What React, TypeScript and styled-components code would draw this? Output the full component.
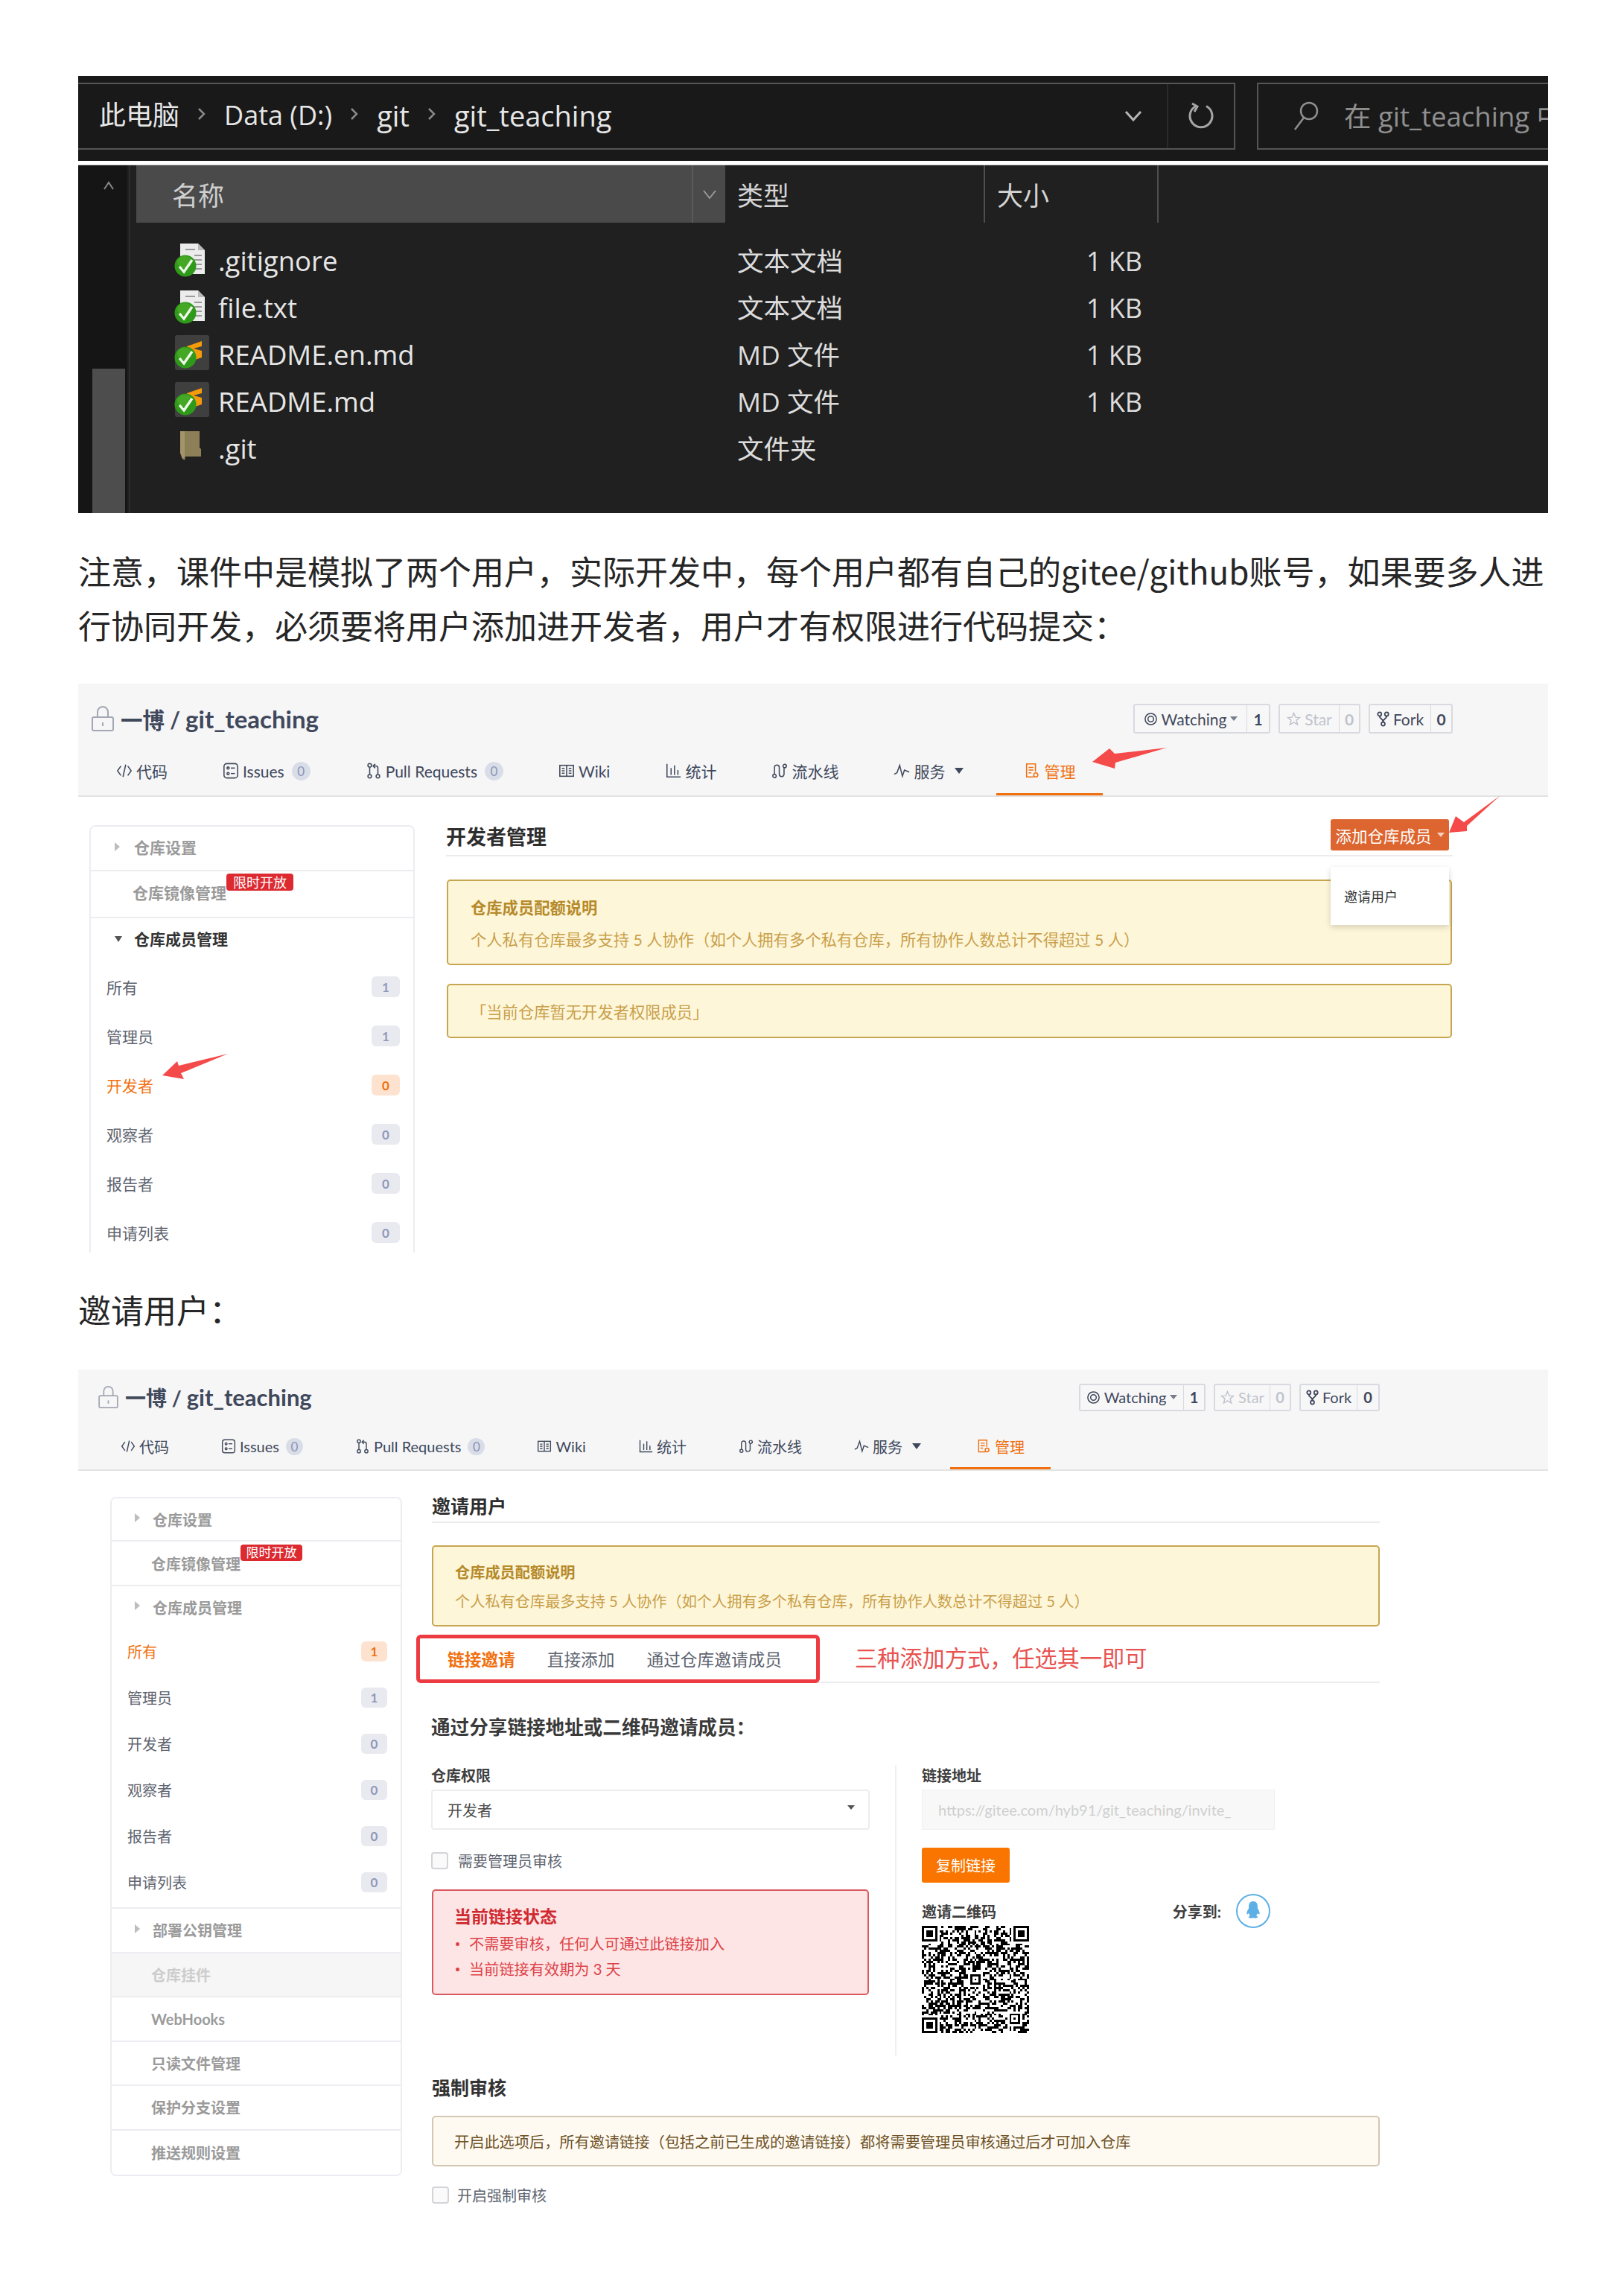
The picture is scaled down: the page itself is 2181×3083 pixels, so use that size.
import React, { useMemo } from 'react'
import styled, { createGlobalStyle, ThemeProvider } from 'styled-components'

const gitee = `"Lato", "Noto Sans CJK SC", sans-serif`
const explorer = `"Open Sans", "Noto Sans CJK SC", sans-serif`
const prose = `"Noto Sans CJK SC", "Noto Sans", sans-serif`

const large = {
  title: 29.5, repo: 33, tab: 21, tabPad: 37, tabIcon: 22, navLeft: 14, headRow: 94, navRow: 56, navLift: 10,
  lockW: 30, lockH: 34, headLeft: 18, headRight: 128, titleGap: 9,
  btnH: 40, btnFont: 21, btnGap: 11, tabBadge: 25, badgeGap: 5, caretGap: 7,
  side: 437, sideLeft: 15, sideGap: 42, font: 21, row: 60, rowB: 63, rowC: 59, item: 66, rowShift: 5,
  caretLeft: 34, textLeft: 58, plainLeft: 56, badgeW: 38, badgeH: 28, tag: 18, tagW: 90, tagH: 23, tagTop: -22,
}

const small = {
  title: 28, repo: 31, tab: 20, tabPad: 35, tabIcon: 20, navLeft: 22, headRow: 74, navRow: 60, navLift: 2,
  lockW: 27, lockH: 30, headLeft: 27, headRight: 226, titleGap: 9,
  btnH: 37, btnFont: 20, btnGap: 11, tabBadge: 23, badgeGap: 4, caretGap: 4,
  side: 392, sideLeft: 43, sideGap: 40, font: 20, row: 58, rowB: 60, rowC: 56, item: 62, rowShift: 0,
  caretLeft: 33, textLeft: 55, plainLeft: 53, badgeW: 35, badgeH: 27, tag: 17, tagW: 83, tagH: 22, tagTop: -23,
}

const GlobalStyle = createGlobalStyle`
  html, body { margin: 0; padding: 0; background: #fff; }
  body { width: 2181px; height: 3083px; overflow: hidden; }
  * { box-sizing: border-box; }
`

const Page = styled.div`
  width: 2181px;
  padding: 102px 102px 0 105px;
`

/* ---------- file explorer shot ---------- */

const Explorer = styled.section`
  height: 587px;
  background: #202020;
  font-family: ${explorer};
  color: #e6e6e6;
  font-size: 36.5px;
  overflow: hidden;
`

const AddressStrip = styled.div`
  height: 114px;
  padding-top: 9px;
  background: #191919;
  display: flex;
  gap: 29px;
`

const AddressBox = styled.div`
  width: 1554px;
  height: 90px;
  border: 2px solid #555;
  border-left: 0;
  display: flex;
  align-items: center;
  padding-left: 28px;
`

const Crumb = styled.span<{ $size?: number }>`
  line-height: 1;
  white-space: nowrap;
  margin-bottom: 3px;
  font-size: ${({ $size = 36.5 }) => $size}px;
`

const CrumbSep = styled.svg`
  width: 16px;
  height: 24px;
  margin: 0 22px 6px;
  fill: none;
  stroke: #8a8a8a;
  stroke-width: 2.5;
`

const AddressTools = styled.div`
  margin-left: auto;
  display: flex;
  align-items: center;
  height: 100%;
`

const ToolCell = styled.div<{ $line?: boolean }>`
  width: 90px;
  height: 100%;
  display: flex;
  align-items: center;
  justify-content: center;
  border-left: ${({ $line }) => ($line ? '2px solid #2a2a2a' : '0')};
`

const SearchBox = styled.div`
  flex: 1;
  height: 90px;
  border: 2px solid #555;
  border-right: 0;
  display: flex;
  align-items: center;
  padding-left: 46px;
  color: #8f8f8f;
  white-space: nowrap;
  overflow: hidden;
  gap: 33px;
  line-height: 1;
  & > svg {
    flex: none;
  }
`

const WhiteBar = styled.div`
  height: 6px;
  background: #fff;
  border-bottom: 1px solid #ccc;
`

const ExplorerBody = styled.div`
  display: flex;
  height: 467px;
`

const NavPane = styled.div`
  width: 66px;
  background: #151515;
  display: flex;
  flex-direction: column;
  align-items: flex-end;
  justify-content: space-between;
  padding: 20px 3px 0 0;
`

const NavCaret = styled.svg`
  width: 16px;
  height: 14px;
  margin-right: 14px;
  fill: none;
  stroke: #8a8a8a;
  stroke-width: 2;
`

const NavThumb = styled.div`
  width: 44px;
  height: 194px;
  background: #4d4d4d;
`

const Files = styled.div`
  flex: 1;
  border-left: 2px solid #2c2c2c;
  margin-left: 2px;
`

const FileHead = styled.div`
  display: grid;
  grid-template-columns: 791px 349px 233px;
  height: 77px;
  margin-left: 8px;
`

const NameHead = styled.div`
  background: #4a4a4a;
  display: flex;
  align-items: center;
  padding-left: 48px;
  color: #cfcfcf;
  font-size: 35px;
  position: relative;
`

const NameSort = styled.div`
  position: absolute;
  right: 0;
  top: 0;
  bottom: 0;
  width: 45px;
  border-left: 2px solid #5a5a5a;
  display: flex;
  align-items: center;
  justify-content: center;
`

const HeadCell = styled.div`
  display: flex;
  align-items: center;
  padding-left: 16px;
  font-size: 35px;
  color: #d4d4d4;
  border-right: 2px solid #4e4e4e;
`

const FileList = styled.div`
  padding-top: 20px;
`

const FileRow = styled.div`
  display: grid;
  grid-template-columns: 799px 349px 233px;
  height: 63px;
  align-items: center;
`

const FileName = styled.div`
  display: flex;
  align-items: center;
  padding-left: 60px;
  gap: 12px;
  line-height: 1;
`

const FileType = styled.div`
  padding-left: 16px;
  font-size: 35.5px;
  line-height: 1;
  color: #dcdcdc;
`

const FileSize = styled.div`
  text-align: right;
  padding-right: 22px;
  line-height: 1;
  font-size: 36px;
  color: #dcdcdc;
`

const FileGlyph = styled.svg`
  width: 46px;
  height: 48px;
  flex: none;
  overflow: visible;
`

const TickBall = () => (
  <>
    <circle cx="14" cy="30" r="14.5" fill="#2f9a1a" />
    <ellipse cx="13" cy="25" rx="10" ry="8" fill="#58b52f" opacity="0.55" />
    <polyline points="6,31 12,38 23,22" fill="none" stroke="#eef8e8" strokeWidth="3.4" />
  </>
)

const FileIcon = ({ kind }: { kind: 'doc' | 'md' | 'dir' }) => {
  if (kind === 'doc') {
    return (
      <FileGlyph viewBox="0 0 46 48">
        <path d="M7 0h24l9 9v32H7z" fill="#ececec" />
        <path d="M31 0l9 9h-9z" fill="#b9b9b9" />
        <path d="M14 8h13M26 16h10M26 22h10M26 28h10M26 34h10" stroke="#9b9b9b" strokeWidth="2" />
        <TickBall />
      </FileGlyph>
    )
  }
  if (kind === 'md') {
    return (
      <FileGlyph viewBox="0 0 46 48">
        <rect x="0" y="-3" width="46" height="47" rx="3" fill="#3f3f3f" />
        <path d="M36 5v7l-11 3 11 3v9l-9 3v-7l-11-4v-7z" fill="#f39b0a" />
        <g transform="translate(0 -3)">
          <TickBall />
        </g>
      </FileGlyph>
    )
  }
  return (
    <FileGlyph viewBox="0 0 46 48">
      <path d="M7 0h26v22l2 2v10H14l-1 5-3-2-3-8z" fill="#8d8058" />
      <path d="M7 0h6v34l-3 3-3-8z" fill="#a39569" />
    </FileGlyph>
  )
}

const explorerRows: { name: string; type: string; size: string; kind: 'doc' | 'md' | 'dir' }[] = [
  { name: '.gitignore', type: '文本文档', size: '1 KB', kind: 'doc' },
  { name: 'file.txt', type: '文本文档', size: '1 KB', kind: 'doc' },
  { name: 'README.en.md', type: 'MD 文件', size: '1 KB', kind: 'md' },
  { name: 'README.md', type: 'MD 文件', size: '1 KB', kind: 'md' },
  { name: '.git', type: '文件夹', size: '', kind: 'dir' },
]

const Sep = () => (
  <CrumbSep viewBox="0 0 16 24">
    <polyline points="4,5 11,12 4,19" />
  </CrumbSep>
)

const ExplorerShot = () => (
  <Explorer>
    <AddressStrip>
      <AddressBox>
        <Crumb $size={36}>此电脑</Crumb>
        <Sep />
        <Crumb $size={36}>Data (D:)</Crumb>
        <Sep />
        <Crumb $size={38}>git</Crumb>
        <Sep />
        <Crumb $size={38}>git_teaching</Crumb>
        <AddressTools>
          <ToolCell>
            <svg width="26" height="18" viewBox="0 0 26 18" fill="none" stroke="#b5b5b5" strokeWidth="3">
              <polyline points="3,3 13,14 23,3" />
            </svg>
          </ToolCell>
          <ToolCell $line>
            <svg width="34" height="38" viewBox="0 0 34 38" fill="none" stroke="#a5a5a5" strokeWidth="3">
              <path d="M10 5.5A15 15 0 1 0 24 5.5" />
              <polyline points="5,2 12,6 8,13" />
            </svg>
          </ToolCell>
        </AddressTools>
      </AddressBox>
      <SearchBox>
        <svg width="36" height="40" viewBox="0 0 36 40" fill="none" stroke="#8f8f8f" strokeWidth="2.5">
          <circle cx="22" cy="13" r="11" />
          <line x1="15" y1="22" x2="3" y2="38" />
        </svg>
        <span>在 git_teaching 中</span>
      </SearchBox>
    </AddressStrip>
    <WhiteBar />
    <ExplorerBody>
      <NavPane>
        <NavCaret viewBox="0 0 16 14">
          <polyline points="2,12 8,3 14,12" />
        </NavCaret>
        <NavThumb />
      </NavPane>
      <Files>
        <FileHead>
          <NameHead>
            名称
            <NameSort>
              <svg width="20" height="14" viewBox="0 0 20 14" fill="none" stroke="#9a9a9a" strokeWidth="2">
                <polyline points="2,2 10,12 18,2" />
              </svg>
            </NameSort>
          </NameHead>
          <HeadCell>类型</HeadCell>
          <HeadCell>大小</HeadCell>
        </FileHead>
        <FileList>
          {explorerRows.map((r) => (
            <FileRow key={r.name}>
              <FileName>
                <FileIcon kind={r.kind} />
                {r.name}
              </FileName>
              <FileType>{r.type}</FileType>
              <FileSize>{r.size}</FileSize>
            </FileRow>
          ))}
        </FileList>
      </Files>
    </ExplorerBody>
  </Explorer>
)

/* ---------- prose ---------- */

const Prose = styled.p<{ $top: number }>`
  margin: ${({ $top }) => $top}px 0 0;
  font-family: ${prose};
  font-size: 44px;
  line-height: 73px;
  color: #262626;
  white-space: nowrap;
`

const ProseLine = styled.span`
  display: block;
`

/* ---------- gitee shots ---------- */

const Shot = styled.section<{ $top: number; $height: number }>`
  position: relative;
  margin-top: ${({ $top }) => $top}px;
  height: ${({ $height }) => $height}px;
  font-family: ${gitee};
  color: #40485b;
`

const RepoHead = styled.header`
  background: #f6f6f7;
  border-bottom: 2px solid #e3e3e3;
`

const TitleRow = styled.div`
  height: ${({ theme }) => theme.headRow}px;
  padding: 0 ${({ theme }) => theme.headRight}px 0 ${({ theme }) => theme.headLeft}px;
  display: flex;
  align-items: center;
  gap: ${({ theme }) => theme.titleGap}px;
`

const LockGlyph = styled.svg`
  width: ${({ theme }) => theme.lockW}px;
  height: ${({ theme }) => theme.lockH}px;
  flex: none;
  fill: none;
  stroke: #a3a7b4;
  stroke-width: 2;
`

const RepoTitle = styled.h1`
  margin: 0;
  font-size: ${({ theme }) => theme.title}px;
  font-weight: 700;
  color: #40485b;
  line-height: 1;
  white-space: nowrap;
`

const RepoName = styled.span`
  font-size: ${({ theme }) => theme.repo}px;
`

const Stats = styled.div`
  margin-left: auto;
  display: flex;
  gap: ${({ theme }) => theme.btnGap}px;
`

const StatBtn = styled.div<{ $w: number; $off?: boolean }>`
  width: ${({ $w }) => $w}px;
  height: ${({ theme }) => theme.btnH}px;
  display: flex;
  align-items: stretch;
  background: #f7f7f8;
  border: 2px solid #d8dae0;
  border-radius: 3px;
  font-size: ${({ theme }) => theme.btnFont}px;
  color: ${({ $off }) => ($off ? '#c0c3cc' : '#40485b')};
`

const StatLabel = styled.span`
  flex: 1;
  display: flex;
  align-items: center;
  justify-content: center;
  gap: 5px;
  white-space: nowrap;
`

const StatCount = styled.span<{ $w: number }>`
  width: ${({ $w }) => $w}px;
  border-left: 1px solid #d8dae0;
  display: flex;
  align-items: center;
  justify-content: center;
  font-weight: 700;
`

const SmallCaret = styled.i`
  display: inline-block;
  border: 5px solid transparent;
  border-top: 6px solid currentColor;
  border-bottom: 0;
  opacity: 0.7;
`

const NavRow = styled.nav`
  height: ${({ theme }) => theme.navRow}px;
  padding-left: ${({ theme }) => theme.navLeft}px;
  display: flex;
`

const Tab = styled.div<{ $active?: boolean }>`
  height: 100%;
  padding: 0 ${({ theme }) => theme.tabPad}px ${({ theme }) => theme.navLift}px;
  display: flex;
  align-items: center;
  gap: 5px;
  font-size: ${({ theme }) => theme.tab}px;
  white-space: nowrap;
  color: ${({ $active }) => ($active ? '#f0700f' : '#40485b')};
  box-shadow: ${({ $active }) => ($active ? 'inset 0 -3px 0 #f0700f' : 'none')};
`

const TabGlyph = styled.svg`
  width: ${({ theme }) => theme.tabIcon}px;
  height: ${({ theme }) => theme.tabIcon + 2}px;
  flex: none;
  fill: none;
  stroke: currentColor;
  stroke-width: 1.7;
`

const TabBadge = styled.span`
  width: ${({ theme }) => theme.tabBadge}px;
  height: ${({ theme }) => theme.tabBadge}px;
  margin-left: ${({ theme }) => theme.badgeGap}px;
  border-radius: 50%;
  background: #d9dde7;
  color: #8a94b8;
  font-size: 17px;
  display: flex;
  align-items: center;
  justify-content: center;
`

const DownCaret = styled.i`
  display: inline-block;
  margin: 0 ${({ theme }) => theme.caretGap}px 0 8px;
  border: 6px solid transparent;
  border-top: 8px solid #40485b;
  border-bottom: 0;
`

const Workspace = styled.div`
  display: flex;
  align-items: flex-start;
  padding-left: ${({ theme }) => theme.sideLeft}px;
  gap: ${({ theme }) => theme.sideGap}px;
`

const SideNav = styled.aside<{ $top: number; $clip?: number }>`
  width: ${({ theme }) => theme.side}px;
  margin-top: ${({ $top }) => $top}px;
  height: ${({ $clip }) => ($clip ? `${$clip}px` : 'auto')};
  overflow: hidden;
  border: 2px solid #ecedf2;
  border-bottom-width: ${({ $clip }) => ($clip ? 0 : 2)}px;
  border-radius: 8px ${({ $clip }) => ($clip ? '8px 0 0' : '8px 8px 8px')};
  font-size: ${({ theme }) => theme.font}px;
`

const SideRow = styled.div<{ $h: number; $muted?: boolean; $strong?: boolean; $line?: boolean }>`
  position: relative;
  height: ${({ $h }) => $h}px;
  display: flex;
  align-items: center;
  padding-left: ${({ theme }) => theme.plainLeft}px;
  padding-bottom: ${({ theme }) => theme.rowShift}px;
  font-weight: 700;
  color: ${({ $muted, $strong }) => ($muted ? '#cdcdcd' : $strong ? '#333' : '#9b9b9b')};
  background: ${({ $muted }) => ($muted ? '#f6f6f6' : '#fff')};
  border-bottom: ${({ $line = true }) => ($line ? '2px solid #ecedf0' : '0')};
`

const SideHead = styled(SideRow)`
  padding-left: ${({ theme }) => theme.textLeft}px;
`

const SideCaret = styled.i<{ $open?: boolean; $strong?: boolean }>`
  position: absolute;
  left: ${({ theme }) => theme.caretLeft - 2}px;
  top: 50%;
  margin-top: -8px;
  border-style: solid;
  border-color: transparent;
  ${({ $open, $strong }) =>
    $open
      ? `border-width: 8px 5px 0; border-top-color: ${$strong ? '#555' : '#aaa'}; margin-top: -6px;`
      : 'border-width: 6px 0 6px 7px; border-left-color: #bdbdbd;'}
`

const TagHost = styled.span`
  position: relative;
`

const LimitTag = styled.em`
  position: absolute;
  left: 100%;
  top: ${({ theme }) => theme.tagTop}px;
  width: ${({ theme }) => theme.tagW}px;
  height: ${({ theme }) => theme.tagH}px;
  margin-top: 12px;
  border-radius: 4px;
  background: #dc2a30;
  color: #fff;
  font-size: ${({ theme }) => theme.tag}px;
  font-style: normal;
  font-weight: 400;
  display: flex;
  align-items: center;
  justify-content: center;
  white-space: nowrap;
  line-height: 1;
`

const MemberList = styled.div<{ $tail: number }>`
  padding-bottom: ${({ $tail }) => $tail}px;
  border-bottom: 2px solid #ecedf0;
`

const MemberRow = styled.div<{ $active?: boolean }>`
  height: ${({ theme }) => theme.item}px;
  display: flex;
  align-items: center;
  justify-content: space-between;
  padding: 0 18px 0 21px;
  color: ${({ $active }) => ($active ? '#f0700f' : '#5e6470')};
`

const Count = styled.span<{ $active?: boolean }>`
  width: ${({ theme }) => theme.badgeW}px;
  height: ${({ theme }) => theme.badgeH}px;
  border-radius: 6px;
  display: flex;
  align-items: center;
  justify-content: center;
  font-size: 17px;
  font-weight: 700;
  background: ${({ $active }) => ($active ? '#fde3cf' : '#e9eaef')};
  color: ${({ $active }) => ($active ? '#f0700f' : '#8f98bb')};
`

const Main = styled.main<{ $w: number; $top: number }>`
  width: ${({ $w }) => $w}px;
  margin-top: ${({ $top }) => $top}px;
  position: relative;
`

const MainHead = styled.div<{ $h: number }>`
  height: ${({ $h }) => $h}px;
  display: flex;
  align-items: flex-start;
  justify-content: space-between;
  border-bottom: 2px solid #ececec;
`

const MainTitle = styled.h2<{ $size: number; $pad: number }>`
  margin: 0;
  padding-top: ${({ $pad }) => $pad}px;
  font-size: ${({ $size }) => $size}px;
  line-height: 1.2;
  font-weight: 700;
  color: #2e2e2e;
`

const AddBtn = styled.div`
  width: 159px;
  height: 42px;
  margin-right: 5px;
  border-radius: 3px;
  background: #dd6530;
  color: #fff;
  font-size: 21.5px;
  display: flex;
  align-items: center;
  justify-content: center;
  gap: 7px;
  white-space: nowrap;
`

const AddMenu = styled.div`
  position: absolute;
  right: 5px;
  top: 64px;
  width: 159px;
  height: 78px;
  padding-left: 18px;
  background: #fff;
  box-shadow: 0 3px 8px rgba(0, 0, 0, 0.16);
  display: flex;
  align-items: center;
  font-size: 18px;
  color: #333;
  z-index: 2;
`

const toneMap = {
  warn: { bg: '#fef6d9', line: '#c7a651', text: '#c9a04a' },
  note: { bg: '#fefaf2', line: '#d3c7b2', text: '#6f5226' },
  danger: { bg: '#fee5e5', line: '#d9595f', text: '#dc4248' },
}

const Notice = styled.div<{ $tone: keyof typeof toneMap; $top: number; $h: number; $left: number; $size: number; $inset?: number }>`
  margin-top: ${({ $top }) => $top}px;
  margin-left: ${({ $inset = 0 }) => $inset}px;
  margin-right: ${({ $inset = 0 }) => $inset}px;
  height: ${({ $h }) => $h}px;
  padding-left: ${({ $left }) => $left}px;
  background: ${({ $tone }) => toneMap[$tone].bg};
  border: 2px solid ${({ $tone }) => toneMap[$tone].line};
  border-radius: 5px;
  color: ${({ $tone }) => toneMap[$tone].text};
  font-size: ${({ $size }) => $size}px;
  display: flex;
  flex-direction: column;
  justify-content: center;
  white-space: nowrap;
`

const NoticeTitle = styled.strong<{ $color: string; $gap: number; $size?: number }>`
  color: ${({ $color }) => $color};
  margin-bottom: ${({ $gap }) => $gap}px;
  font-size: ${({ $size }) => ($size ? `${$size}px` : 'inherit')};
`

const DotList = styled.ul`
  margin: 0;
  padding: 0;
  list-style: none;
`

const DotItem = styled.li`
  position: relative;
  padding-left: 20px;
  line-height: 34px;
  &::before {
    content: '';
    position: absolute;
    left: 2px;
    top: 15px;
    width: 5px;
    height: 5px;
    border-radius: 50%;
    background: currentColor;
  }
`

const TabsLine = styled.div`
  margin-top: 11px;
  margin-left: -21px;
  height: 65px;
  display: flex;
  align-items: center;
  gap: 47px;
  position: relative;
  &::after {
    content: '';
    position: absolute;
    left: 21px;
    right: 0;
    bottom: 0;
    height: 2px;
    background: #ececec;
    z-index: 0;
  }
`

const MethodBox = styled.div`
  width: 542px;
  height: 65px;
  padding-left: 37px;
  display: flex;
  align-items: center;
  gap: 43px;
  border: 5px solid #ec3c42;
  border-radius: 6px;
  background: #fff;
  z-index: 1;
  font-size: 22.7px;
  color: #5e6470;
  white-space: nowrap;
`

const Method = styled.span<{ $active?: boolean }>`
  font-weight: ${({ $active }) => ($active ? 700 : 400)};
  color: ${({ $active }) => ($active ? '#f0700f' : '#5e6470')};
`

const Annotation = styled.span`
  font-size: 30.2px;
  color: #e8534f;
  white-space: nowrap;
  margin-bottom: 6px;
`

const InviteHeading = styled.h3`
  margin: 42px 0 0 -1px;
  font-size: 25.6px;
  line-height: 34px;
  font-weight: 700;
  color: #3a3a3a;
  white-space: nowrap;
`

const Columns = styled.div`
  display: flex;
  margin: 34px 0 0 -1px;
  height: 390px;
`

const LeftCol = styled.div`
  width: 625px;
  padding-right: 34px;
  border-right: 2px solid #f0f0f0;
`

const RightCol = styled.div`
  padding-left: 34px;
  width: 508px;
`

const FieldLabel = styled.div`
  height: 33px;
  font-size: 20px;
  font-weight: 700;
  color: #3f3f3f;
  line-height: 28px;
`

const SelectBox = styled.div`
  height: 54px;
  padding: 0 18px 0 20px;
  display: flex;
  align-items: center;
  justify-content: space-between;
  border: 2px solid #ededed;
  border-radius: 4px;
  font-size: 20px;
  color: #4a4a4a;
`

const SelectCaret = styled.i`
  border: 5px solid transparent;
  border-top: 6px solid #555;
  border-bottom: 0;
  margin-top: -6px;
`

const CheckRow = styled.label<{ $top: number; $gap: number }>`
  margin-top: ${({ $top }) => $top}px;
  display: flex;
  align-items: center;
  gap: ${({ $gap }) => $gap}px;
  font-size: 20px;
  color: #5e6470;
`

const CheckBox = styled.input.attrs({ type: 'checkbox' })`
  appearance: none;
  margin: 0;
  width: 23px;
  height: 23px;
  border: 2px solid #d4d4d8;
  border-radius: 4px;
  background: #fafafa;
`

const LinkInput = styled.div`
  height: 54px;
  padding-left: 21px;
  display: flex;
  align-items: center;
  background: #f8f8f8;
  border: 1px solid #f1f1f1;
  color: #cfcfcf;
  font-size: 20px;
  white-space: nowrap;
  overflow: hidden;
`

const CopyBtn = styled.div`
  width: 118px;
  height: 47px;
  margin-top: 24px;
  border-radius: 3px;
  background: #f97500;
  color: #fff;
  font-size: 20px;
  display: flex;
  align-items: center;
  justify-content: center;
`

const ShareRow = styled.div`
  margin-top: 15px;
  width: 468px;
  height: 46px;
  display: flex;
  align-items: center;
  justify-content: space-between;
  font-size: 20px;
  font-weight: 700;
  color: #3f3f3f;
`

const ShareTo = styled.div`
  display: flex;
  align-items: center;
  gap: 20px;
`

const QqRound = styled.span`
  width: 46px;
  height: 46px;
  border-radius: 50%;
  border: 2px solid #5cb0e6;
  display: flex;
  align-items: center;
  justify-content: center;
`

const QrSvg = styled.svg`
  display: block;
  width: 144px;
  height: 144px;
  margin-top: -3px;
  shape-rendering: crispEdges;
`

const ForceHeading = styled.h3`
  margin: 26px 0 0;
  font-size: 25px;
  line-height: 34px;
  font-weight: 700;
  color: #333;
`

const Pointer = styled.svg<{ $x: number; $y: number }>`
  position: absolute;
  left: ${({ $x }) => $x}px;
  top: ${({ $y }) => $y}px;
  overflow: visible;
  fill: #f44a4a;
  z-index: 3;
`

/* ---------- drawings ---------- */

const CodeIcon = () => (
  <TabGlyph viewBox="0 0 24 24">
    <polyline points="7,5 2,12 7,19" />
    <polyline points="17,5 22,12 17,19" />
    <line x1="14" y1="3" x2="10" y2="21" />
  </TabGlyph>
)
const IssueIcon = () => (
  <TabGlyph viewBox="0 0 24 24">
    <rect x="2" y="1.5" width="20" height="21" rx="4" />
    <circle cx="8" cy="8" r="1.6" />
    <circle cx="8" cy="16" r="1.6" />
    <line x1="12" y1="8" x2="18" y2="8" />
    <line x1="12" y1="16" x2="18" y2="16" />
  </TabGlyph>
)
const PullIcon = () => (
  <TabGlyph viewBox="0 0 24 24">
    <circle cx="6" cy="4" r="2.6" />
    <circle cx="6" cy="20" r="2.6" />
    <circle cx="18" cy="20" r="2.6" />
    <line x1="6" y1="7" x2="6" y2="17" />
    <path d="M18 17V8c0-2-1-3-3-3h-3" />
    <polyline points="14,2 11,5 14,8" />
  </TabGlyph>
)
const WikiIcon = () => (
  <TabGlyph viewBox="0 0 24 24">
    <rect x="2" y="4" width="20" height="16" />
    <line x1="12" y1="4" x2="12" y2="20" />
    <path d="M5 8.5h4M5 12h4M5 15.5h4M15 8.5h4M15 12h4M15 15.5h4" />
  </TabGlyph>
)
const StatIcon = () => (
  <TabGlyph viewBox="0 0 24 24">
    <polyline points="3,2 3,21 23,21" />
    <line x1="9" y1="8" x2="9" y2="18" />
    <line x1="14" y1="4" x2="14" y2="18" />
    <line x1="19" y1="11" x2="19" y2="18" />
  </TabGlyph>
)
const FlowIcon = () => (
  <TabGlyph viewBox="0 0 24 24">
    <circle cx="4.5" cy="19.5" r="2.5" />
    <circle cx="19.5" cy="5" r="2.5" />
    <path d="M4.5 17V7a3.5 3.5 0 0 1 7 0v10a3.5 3.5 0 0 0 7 0V8" />
  </TabGlyph>
)
const PulseIcon = () => (
  <TabGlyph viewBox="0 0 24 24">
    <polyline points="1,17 5,15 9,4 13,20 16,11 23,14" />
  </TabGlyph>
)
const ManageIcon = () => (
  <TabGlyph viewBox="0 0 24 24">
    <path d="M15 21H4V2h13v11" />
    <path d="M7 7h7M7 11h7M7 15h4" />
    <circle cx="17.5" cy="18" r="3" />
  </TabGlyph>
)

const EyeIcon = () => (
  <svg width="19" height="19" viewBox="0 0 20 20" fill="none" stroke="currentColor" strokeWidth="1.6">
    <circle cx="10" cy="10" r="8" />
    <circle cx="10" cy="10" r="4" />
  </svg>
)
const StarIcon = () => (
  <svg width="19" height="19" viewBox="0 0 24 24" fill="none" stroke="currentColor" strokeWidth="1.8">
    <polygon points="12,2 15,9 22,9.5 16.5,14 18.5,21.5 12,17.5 5.5,21.5 7.5,14 2,9.5 9,9" />
  </svg>
)
const ForkIcon = () => (
  <svg width="17" height="21" viewBox="0 0 18 22" fill="none" stroke="currentColor" strokeWidth="1.9">
    <circle cx="4" cy="4" r="2.6" />
    <circle cx="14" cy="4" r="2.6" />
    <circle cx="9" cy="18" r="2.6" />
    <path d="M4 7c0 4 5 3 5 8M14 7c0 4-5 3-5 8" />
  </svg>
)

const Qr = () => {
  const path = useMemo(() => {
    const n = 49
    let seed = 91357
    const next = () => {
      seed = (seed * 1103515245 + 12345) & 0x7fffffff
      return (seed >> 16) & 1
    }
    const grid: boolean[][] = []
    for (let y = 0; y < n; y++) {
      grid.push([])
      for (let x = 0; x < n; x++) grid[y].push(next() === 1)
    }
    const mark = (ox: number, oy: number, size: number) => {
      for (let y = -1; y <= size; y++) {
        for (let x = -1; x <= size; x++) {
          const cx = ox + x
          const cy = oy + y
          if (cx < 0 || cy < 0 || cx >= n || cy >= n) continue
          const edge = x === 0 || y === 0 || x === size - 1 || y === size - 1
          const inside = x >= 2 && y >= 2 && x <= size - 3 && y <= size - 3
          grid[cy][cx] = x >= 0 && y >= 0 && x < size && y < size && (edge || inside)
        }
      }
    }
    mark(0, 0, 7)
    mark(n - 7, 0, 7)
    mark(0, n - 7, 7)
    mark(n - 9, n - 9, 5)
    mark(22, 22, 5)
    let d = ''
    grid.forEach((row, y) =>
      row.forEach((on, x) => {
        if (on) d += `M${x} ${y}h1v1h-1z`
      }),
    )
    return d
  }, [])
  return (
    <QrSvg viewBox="0 0 49 49">
      <path d={path} fill="#000" />
    </QrSvg>
  )
}

/* ---------- shared repo bar ---------- */

type BtnSizes = { watch: [number, number]; star: [number, number]; fork: [number, number] }

const RepoBar = ({ sizes }: { sizes: BtnSizes }) => (
  <RepoHead>
    <TitleRow>
      <LockGlyph viewBox="0 0 30 34">
        <rect x="1" y="15" width="28" height="18" rx="2" />
        <path d="M8 15V8a7 7 0 0 1 14 0v7" />
        <line x1="15" y1="22" x2="15" y2="27" />
      </LockGlyph>
      <RepoTitle>
        一博 / <RepoName>git_teaching</RepoName>
      </RepoTitle>
      <Stats>
        <StatBtn $w={sizes.watch[0]}>
          <StatLabel>
            <EyeIcon />
            Watching
            <SmallCaret />
          </StatLabel>
          <StatCount $w={sizes.watch[1]}>1</StatCount>
        </StatBtn>
        <StatBtn $w={sizes.star[0]} $off>
          <StatLabel>
            <StarIcon />
            Star
          </StatLabel>
          <StatCount $w={sizes.star[1]}>0</StatCount>
        </StatBtn>
        <StatBtn $w={sizes.fork[0]}>
          <StatLabel>
            <ForkIcon />
            Fork
          </StatLabel>
          <StatCount $w={sizes.fork[1]}>0</StatCount>
        </StatBtn>
      </Stats>
    </TitleRow>
    <NavRow>
      <Tab>
        <CodeIcon />
        代码
      </Tab>
      <Tab>
        <IssueIcon />
        Issues
        <TabBadge>0</TabBadge>
      </Tab>
      <Tab>
        <PullIcon />
        Pull Requests
        <TabBadge>0</TabBadge>
      </Tab>
      <Tab>
        <WikiIcon />
        Wiki
      </Tab>
      <Tab>
        <StatIcon />
        统计
      </Tab>
      <Tab>
        <FlowIcon />
        流水线
      </Tab>
      <Tab>
        <PulseIcon />
        服务
        <DownCaret />
      </Tab>
      <Tab $active>
        <ManageIcon />
        管理
      </Tab>
    </NavRow>
  </RepoHead>
)

const memberLabels = ['所有', '管理员', '开发者', '观察者', '报告者', '申请列表']
const memberCounts = [1, 1, 0, 0, 0, 0]

const Members = ({ active, tail }: { active: number; tail: number }) => (
  <MemberList $tail={tail}>
    {memberLabels.map((label, i) => (
      <MemberRow key={label} $active={i === active}>
        {label}
        <Count $active={i === active}>{memberCounts[i]}</Count>
      </MemberRow>
    ))}
  </MemberList>
)

const MirrorRow = ({ h }: { h: number }) => (
  <SideRow $h={h}>
    <TagHost>
      仓库镜像管理
      <LimitTag>限时开放</LimitTag>
    </TagHost>
  </SideRow>
)

const quotaTitle = '仓库成员配额说明'
const quotaText = '个人私有仓库最多支持 5 人协作（如个人拥有多个私有仓库，所有协作人数总计不得超过 5 人）'

const DevelopersShot = () => (
  <ThemeProvider theme={large}>
    <Shot $top={42} $height={762}>
      <RepoBar sizes={{ watch: [184, 30], star: [110, 27], fork: [113, 28] }} />
      <Workspace>
        <SideNav $top={38} $clip={574}>
          <SideHead $h={large.row}>
            <SideCaret />
            仓库设置
          </SideHead>
          <MirrorRow h={large.rowB} />
          <SideHead $h={large.rowC} $strong $line={false}>
            <SideCaret $open $strong />
            仓库成员管理
          </SideHead>
          <Members active={2} tail={0} />
        </SideNav>
        <Main $w={1352} $top={30}>
          <MainHead $h={50}>
            <MainTitle $size={27} $pad={8}>开发者管理</MainTitle>
            <AddBtn>
              添加仓库成员
              <SmallCaret />
            </AddBtn>
          </MainHead>
          <AddMenu>邀请用户</AddMenu>
          <Notice $tone="warn" $top={31} $h={115} $left={30} $size={21.3} $inset={1}>
            <NoticeTitle $color="#b58a2a" $gap={12}>{quotaTitle}</NoticeTitle>
            <span>{quotaText}</span>
          </Notice>
          <Notice $tone="warn" $top={25} $h={73} $left={30} $size={21.3} $inset={1}>
            <span>「当前仓库暂无开发者权限成员」</span>
          </Notice>
        </Main>
      </Workspace>
      <Pointer $x={1357} $y={81} width="110" height="40" viewBox="0 0 110 40">
        <polygon points="105,5 35,13 28,6 5,24 35,33 36,25" />
      </Pointer>
      <Pointer $x={1835} $y={146} width="80" height="60" viewBox="0 0 80 60">
        <polygon points="75,4 26,40 15,32 6,54 30,52 30,45" />
      </Pointer>
      <Pointer $x={108} $y={492} width="100" height="45" viewBox="0 0 100 45">
        <polygon points="93,5 27,21 25,15 5,34 34,39 30,31" />
      </Pointer>
    </Shot>
  </ThemeProvider>
)

const InviteShot = () => (
  <ThemeProvider theme={small}>
    <Shot $top={44} $height={1142}>
      <RepoBar sizes={{ watch: [170, 28], star: [104, 27], fork: [108, 29] }} />
      <Workspace>
        <SideNav $top={35}>
          <SideHead $h={small.row}>
            <SideCaret />
            仓库设置
          </SideHead>
          <MirrorRow h={small.rowB} />
          <SideHead $h={small.rowC} $line={false}>
            <SideCaret />
            仓库成员管理
          </SideHead>
          <Members active={0} tail={3} />
          <SideHead $h={59.5}>
            <SideCaret />
            部署公钥管理
          </SideHead>
          <SideRow $h={59.5} $muted>仓库挂件</SideRow>
          <SideRow $h={59.5}>WebHooks</SideRow>
          <SideRow $h={59.5}>只读文件管理</SideRow>
          <SideRow $h={59.5}>保护分支设置</SideRow>
          <SideRow $h={59.5} $line={false}>推送规则设置</SideRow>
        </SideNav>
        <Main $w={1273} $top={24}>
          <MainHead $h={46}>
            <MainTitle $size={25} $pad={8}>邀请用户</MainTitle>
          </MainHead>
          <Notice $tone="warn" $top={30} $h={109} $left={29} $size={20.2}>
            <NoticeTitle $color="#b58a2a" $gap={10}>{quotaTitle}</NoticeTitle>
            <span>{quotaText}</span>
          </Notice>
          <TabsLine>
            <MethodBox>
              <Method $active>链接邀请</Method>
              <Method>直接添加</Method>
              <Method>通过仓库邀请成员</Method>
            </MethodBox>
            <Annotation>三种添加方式，任选其一即可</Annotation>
          </TabsLine>
          <InviteHeading>通过分享链接地址或二维码邀请成员：</InviteHeading>
          <Columns>
            <LeftCol>
              <FieldLabel>仓库权限</FieldLabel>
              <SelectBox>
                开发者
                <SelectCaret />
              </SelectBox>
              <CheckRow $top={27} $gap={13}>
                <CheckBox />
                需要管理员审核
              </CheckRow>
              <Notice $tone="danger" $top={24} $h={142} $left={28} $size={20.2} $inset={1}>
                <NoticeTitle $color="#cf2a30" $gap={4} $size={23}>当前链接状态</NoticeTitle>
                <DotList>
                  <DotItem>不需要审核，任何人可通过此链接加入</DotItem>
                  <DotItem>当前链接有效期为 3 天</DotItem>
                </DotList>
              </Notice>
            </LeftCol>
            <RightCol>
              <FieldLabel>链接地址</FieldLabel>
              <LinkInput>https://gitee.com/hyb91/git_teaching/invite_</LinkInput>
              <CopyBtn>复制链接</CopyBtn>
              <ShareRow>
                邀请二维码
                <ShareTo>
                  分享到:
                  <QqRound>
                    <svg width="26" height="28" viewBox="0 0 24 26" fill="#5cb0e6">
                      <path d="M12 1C8 1 6.500 4 6.500 7.500v2.300C5 12 4 14 4 16c0 1.200.6 1.600 1.200 1l1.300-1.200c.4 1.400 1 2.500 1.900 3.200-1.300.4-2.100 1-2.100 1.700 0 .9 1.700 1.300 3.400 1.300 1 0 1.800-.2 2.300-.6.500.4 1.300.6 2.300.6 1.700 0 3.400-.4 3.400-1.300 0-.7-.8-1.300-2.100-1.700.9-.7 1.500-1.800 1.900-3.200l1.300 1.200c.6.600 1.200.2 1.200-1 0-2-1-4-2.500-6.200V7.500C17.500 4 16 1 12 1z" />
                    </svg>
                  </QqRound>
                </ShareTo>
              </ShareRow>
              <Qr />
            </RightCol>
          </Columns>
          <ForceHeading>强制审核</ForceHeading>
          <Notice $tone="note" $top={21} $h={68} $left={28} $size={20.2}>
            <span>开启此选项后，所有邀请链接（包括之前已生成的邀请链接）都将需要管理员审核通过后才可加入仓库</span>
          </Notice>
          <CheckRow $top={24} $gap={11}>
            <CheckBox />
            开启强制审核
          </CheckRow>
        </Main>
      </Workspace>
    </Shot>
  </ThemeProvider>
)

export default function App() {
  return (
    <Page>
      <GlobalStyle />
      <ExplorerShot />
      <Prose $top={41}>
        <ProseLine>注意，课件中是模拟了两个用户，实际开发中，每个用户都有自己的gitee/github账号，如果要多人进</ProseLine>
        <ProseLine>行协同开发，必须要将用户添加进开发者，用户才有权限进行代码提交：</ProseLine>
      </Prose>
      <DevelopersShot />
      <Prose $top={42}>
        <ProseLine>邀请用户：</ProseLine>
      </Prose>
      <InviteShot />
    </Page>
  )
}
